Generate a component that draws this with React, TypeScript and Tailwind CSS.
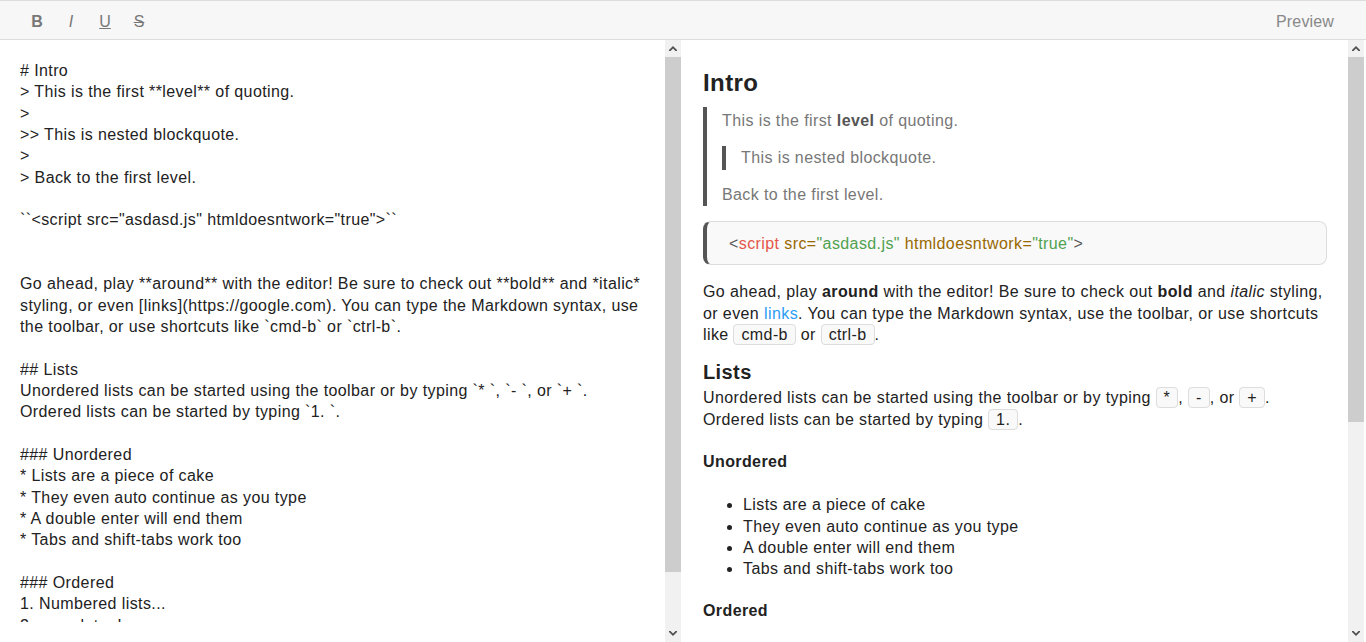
import React from "react";

const FONT = { fontFamily: '"Liberation Sans", Arial, sans-serif' };

const SOURCE = `# Intro
> This is the first **level** of quoting.
>
>> This is nested blockquote.
>
> Back to the first level.

\`\`<script src="asdasd.js" htmldoesntwork="true">\`\`


Go ahead, play **around** with the editor! Be sure to check out **bold** and *italic* styling, or even [links](https://google.com). You can type the Markdown syntax, use the toolbar, or use shortcuts like \`cmd-b\` or \`ctrl-b\`.

## Lists
Unordered lists can be started using the toolbar or by typing \`* \`, \`- \`, or \`+ \`. Ordered lists can be started by typing \`1. \`.

### Unordered
* Lists are a piece of cake
* They even auto continue as you type
* A double enter will end them
* Tabs and shift-tabs work too

### Ordered
1. Numbered lists...
2. ...work too!
3. What about images?`;

const Arrow = ({ up }: { up?: boolean }) => (
  <div className="h-[17px] flex items-center justify-center">
    <svg width="8" height="5" viewBox="0 0 8 5">
      {up ? (
        <polygon points="0,4 4,0 8,4 8,5 6.5,5 4,2.5 1.5,5 0,5" fill="#505050" />
      ) : (
        <polygon points="0,1 4,5 8,1 8,0 6.5,0 4,2.5 1.5,0 0,0" fill="#505050" />
      )}
    </svg>
  </div>
);

// fake classic scrollbar, thumb height in px
const Scrollbar = ({ thumb }: { thumb: number }) => (
  <div className="w-4 shrink-0 bg-[#f1f1f1] flex flex-col">
    <Arrow up />
    <div className="flex-1">
      <div className="bg-[#cdcdcd]" style={{ height: thumb }} />
    </div>
    <Arrow />
  </div>
);

const Code = ({ children }: { children: React.ReactNode }) => (
  <code
    className="px-[7px] py-px border border-[#ddd] rounded bg-[#f9f9f9]"
    style={FONT}
  >
    {children}
  </code>
);

const Toolbar = () => (
  <div className="h-10 shrink-0 flex items-center justify-between bg-[#f7f7f7] border-t border-b border-[#ddd] pt-1 pl-[22px] pr-8 text-[#777]">
    <div className="flex gap-1 text-base">
      <button className="w-[30px] h-[30px] font-bold">B</button>
      <button className="w-[30px] h-[30px] italic">I</button>
      <button className="w-[30px] h-[30px] underline">U</button>
      <button className="w-[30px] h-[30px] line-through">S</button>
    </div>
    <span className="text-base text-[#888] tracking-[0.15px]">Preview</span>
  </div>
);

const Preview = () => (
  <div className="flex-1 overflow-hidden pt-7 pl-[22px] pr-[21px] text-base leading-[21.33px] tracking-[0.4px] text-[#222]">
    <h1 className="text-2xl font-bold leading-[29px] mb-[10px]">Intro</h1>

    <blockquote className="border-l-4 border-[#555] pl-[15px] pt-[3px] pb-px text-[#777]">
      <p>
        This is the first <strong className="text-[#555]">level</strong> of quoting.
      </p>
      <blockquote className="mt-[15px] border-l-4 border-[#555] pl-[15px] py-px">
        <p>This is nested blockquote.</p>
      </blockquote>
      <p className="mt-[14px]">Back to the first level.</p>
    </blockquote>

    <pre
      className="mt-[15px] border border-[#ddd] border-l-4 border-l-[#555] rounded-lg bg-[#f9f9f9] pl-[22px] pt-[11px] pb-[10px] text-[#555]"
      style={FONT}
    >
      &lt;<span className="text-[#e45649]">script</span>{" "}
      <span className="text-[#986801]">src=</span>
      <span className="text-[#50a14f]">"asdasd.js"</span>{" "}
      <span className="text-[#986801]">htmldoesntwork=</span>
      <span className="text-[#50a14f]">"true"</span>&gt;
    </pre>

    <p className="mt-4">
      Go ahead, play <strong>around</strong> with the editor! Be sure to check out{" "}
      <strong>bold</strong> and <em>italic</em> styling, or even{" "}
      <a className="text-[#2a9df4]">links</a>. You can type the Markdown syntax, use the
      toolbar, or use shortcuts like <Code>cmd-b</Code> or <Code>ctrl-b</Code>.
    </p>

    <h2 className="mt-[15px] mb-[3px] text-xl font-bold leading-6">Lists</h2>
    <p>
      Unordered lists can be started using the toolbar or by typing <Code>*</Code>,{" "}
      <Code>-</Code>, or <Code>+</Code>. Ordered lists can be started by typing{" "}
      <Code>1.</Code>.
    </p>

    <h3 className="mt-[21px] font-bold">Unordered</h3>
    <ul className="mt-[22px] pl-10 list-disc">
      <li>Lists are a piece of cake</li>
      <li>They even auto continue as you type</li>
      <li>A double enter will end them</li>
      <li>Tabs and shift-tabs work too</li>
    </ul>

    <h3 className="mt-[20px] font-bold">Ordered</h3>
    <ol className="mt-[22px] pl-10 list-decimal">
      <li>Numbered lists...</li>
      <li>...work too!</li>
      <li>What about images?</li>
    </ol>
  </div>
);

export default function App() {
  return (
    <div className="h-screen flex flex-col bg-white overflow-hidden" style={FONT}>
      <Toolbar />
      <div className="flex-1 flex min-h-0">
        {/* Editor */}
        <div className="w-[681px] shrink-0 flex">
          <div className="flex-1 flex flex-col py-5 pl-5 pr-5 min-w-0">
            <div className="flex-1 overflow-hidden whitespace-pre-wrap text-base leading-[21.33px] tracking-[0.4px] text-[#222]">
              {SOURCE}
            </div>
          </div>
          <Scrollbar thumb={515} />
        </div>

        {/* Preview */}
        <div className="flex-1 flex min-w-0 pr-[2px]">
          <Preview />
          <Scrollbar thumb={365} />
        </div>
      </div>
    </div>
  );
}
